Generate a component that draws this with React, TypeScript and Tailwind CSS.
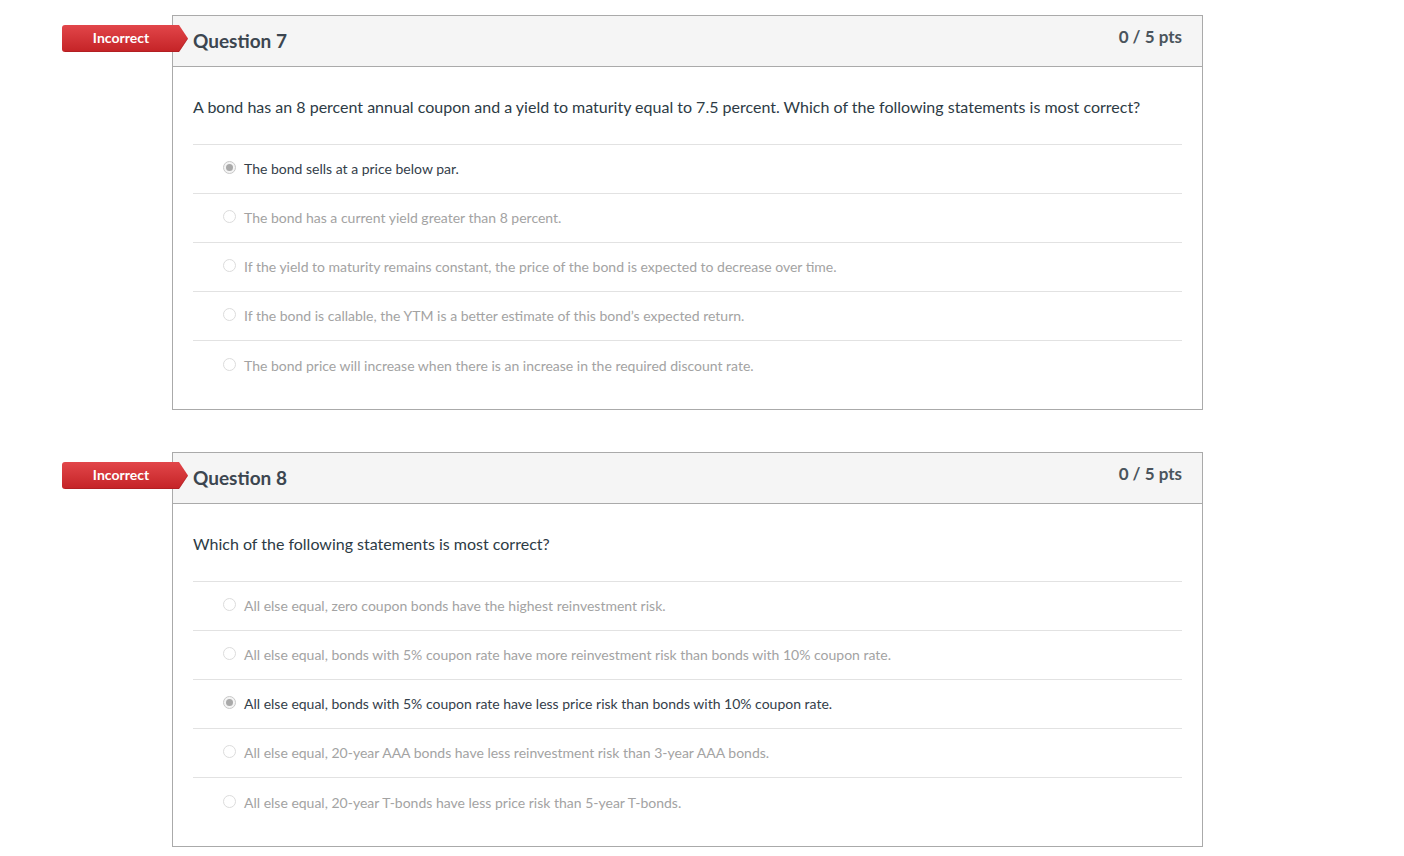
const questions = [
  {
    num: 7,
    text: "A bond has an 8 percent annual coupon and a yield to maturity equal to 7.5 percent. Which of the following statements is most correct?",
    answers: [
      "The bond sells at a price below par.",
      "The bond has a current yield greater than 8 percent.",
      "If the yield to maturity remains constant, the price of the bond is expected to decrease over time.",
      "If the bond is callable, the YTM is a better estimate of this bond\u2019s expected return.",
      "The bond price will increase when there is an increase in the required discount rate.",
    ],
    selected: 0,
  },
  {
    num: 8,
    text: "Which of the following statements is most correct?",
    answers: [
      "All else equal, zero coupon bonds have the highest reinvestment risk.",
      "All else equal, bonds with 5% coupon rate have more reinvestment risk than bonds with 10% coupon rate.",
      "All else equal, bonds with 5% coupon rate have less price risk than bonds with 10% coupon rate.",
      "All else equal, 20-year AAA bonds have less reinvestment risk than 3-year AAA bonds.",
      "All else equal, 20-year T-bonds have less price risk than 5-year T-bonds.",
    ],
    selected: 2,
  },
];

// 红色 "Incorrect" 标签
function IncorrectBadge() {
  return (
    <div className="absolute left-[-111px] top-[9px] h-[27px] w-[126px]">
      <svg className="absolute inset-0" width="126" height="27" viewBox="0 0 126 27">
        <defs>
          <linearGradient id="badgeGrad" x1="0" y1="0" x2="0" y2="1">
            <stop offset="0" stopColor="#e2464a" />
            <stop offset="1" stopColor="#c42326" />
          </linearGradient>
        </defs>
        <path d="M3 0 H117 L126 13.5 L117 27 H3 A3 3 0 0 1 0 24 V3 A3 3 0 0 1 3 0 Z" fill="url(#badgeGrad)" />
        <path d="M3 26.5 H117 L125.5 13.8" fill="none" stroke="#9e1b1e" strokeOpacity="0.45" />
      </svg>
      <div className="relative flex h-full w-[118px] items-center justify-center pb-[2px] text-[14px] font-bold text-white">
        Incorrect
      </div>
    </div>
  );
}

function Radio({ checked }: { checked: boolean }) {
  return checked ? (
    <span className="-mt-[3px] flex h-[13px] w-[13px] shrink-0 items-center justify-center rounded-full border border-[#c8c8c8] bg-[#f4f4f4]">
      <span className="h-[7px] w-[7px] rounded-full bg-[#a9a9a9]" />
    </span>
  ) : (
    <span className="-mt-[3px] h-[13px] w-[13px] shrink-0 rounded-full border border-[#dcdcdc] bg-white" />
  );
}

function QuestionCard({ q }: { q: (typeof questions)[number] }) {
  return (
    <div className="relative ml-[110px] w-[1031px] border border-[#aaaaaa] bg-white">
      <IncorrectBadge />
      {/* 标题栏 */}
      <div className="flex h-[51px] items-start justify-between border-b border-[#aaaaaa] bg-[#f5f5f5] px-5">
        <h2 className="mt-[13px] text-[19px] font-bold leading-[24px] text-[#3c4650]">Question {q.num}</h2>
        <div className="mt-[9px] text-[17px] font-bold leading-[24px] text-[#4a545c]">0 / 5 pts</div>
      </div>
      {/* 题干与选项 */}
      <div className="px-5 pb-[19px] pt-[28px]">
        <p className="text-[16px] leading-[24px] text-[#2d3b45]">{q.text}</p>
        <div className="mt-[25px] border-t border-[#e2e2e2]">
          {q.answers.map((a, i) => (
            <div
              key={i}
              className={`flex h-[49px] items-center gap-[8px] pl-[30px] ${i < q.answers.length - 1 ? "border-b border-[#e2e2e2]" : ""}`}
            >
              <Radio checked={i === q.selected} />
              <span className={`text-[14px] leading-[20px] ${i === q.selected ? "text-[#34404a]" : "text-[#a3a3a3]"}`}>
                {a}
              </span>
            </div>
          ))}
        </div>
      </div>
    </div>
  );
}

export default function App() {
  return (
    <div className="min-h-screen bg-white pl-[62px] pt-[15px] font-['Lato','Liberation_Sans',sans-serif]">
      <div className="flex flex-col gap-[42px]">
        {questions.map((q) => (
          <QuestionCard key={q.num} q={q} />
        ))}
      </div>
    </div>
  );
}
